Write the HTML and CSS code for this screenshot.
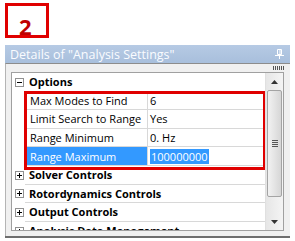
FILE: index.html
```html
<!DOCTYPE html>
<html lang="en">
<head>
    <meta charset="UTF-8">
    <title>Details of Analysis Settings</title>
    <link rel="stylesheet" href="styles.css">
</head>
<body>
    <div class="step"><span>2</span></div>

    <div class="panel">
        <div class="title">
            <span>Details of "Analysis Settings"</span>
            <svg class="pin" width="9" height="10" viewBox="0 0 9 10">
                <path d="M2.5 0.5h4v5h-4z" fill="none" stroke="#fff"/>
                <path d="M5 1v4" stroke="#fff"/>
                <path d="M0 6.5h9M4.5 7v3" stroke="#fff"/>
            </svg>
        </div>
        <div class="frame">
            <div class="grip-row"><div class="grip"></div></div>
            <div class="view">
                <div class="tree">
                    <div class="row">
                        <div class="gutter">
                            <svg class="exp" width="9" height="9" viewBox="0 0 9 9"><rect x="0.5" y="0.5" width="8" height="8" fill="#fff" stroke="#919191"/><path d="M2 4.5h5" stroke="#000"/></svg>
                        </div>
                        <div class="cell group-name">Options</div>
                    </div>

                    <div class="props">
                        <div class="gutter-col"></div>
                        <div class="prop-rows">
                            <div class="row">
                                <div class="cell name">Max Modes to Find</div>
                                <div class="cell value">6</div>
                            </div>
                            <div class="row">
                                <div class="cell name">Limit Search to Range</div>
                                <div class="cell value">Yes</div>
                            </div>
                            <div class="row">
                                <div class="cell name">Range Minimum</div>
                                <div class="cell value">0. Hz</div>
                            </div>
                            <div class="row">
                                <div class="cell name selected">Range Maximum</div>
                                <div class="cell value"><span class="sel-text">100000000</span></div>
                            </div>
                        </div>
                    </div>

                    <div class="row">
                        <div class="gutter">
                            <svg class="exp" width="9" height="9" viewBox="0 0 9 9"><rect x="0.5" y="0.5" width="8" height="8" fill="#fff" stroke="#919191"/><path d="M2 4.5h5M4.5 2v5" stroke="#000"/></svg>
                        </div>
                        <div class="cell group-name">Solver Controls</div>
                    </div>
                    <div class="row">
                        <div class="gutter">
                            <svg class="exp" width="9" height="9" viewBox="0 0 9 9"><rect x="0.5" y="0.5" width="8" height="8" fill="#fff" stroke="#919191"/><path d="M2 4.5h5M4.5 2v5" stroke="#000"/></svg>
                        </div>
                        <div class="cell group-name">Rotordynamics Controls</div>
                    </div>
                    <div class="row">
                        <div class="gutter">
                            <svg class="exp" width="9" height="9" viewBox="0 0 9 9"><rect x="0.5" y="0.5" width="8" height="8" fill="#fff" stroke="#919191"/><path d="M2 4.5h5M4.5 2v5" stroke="#000"/></svg>
                        </div>
                        <div class="cell group-name">Output Controls</div>
                    </div>
                    <div class="row">
                        <div class="gutter">
                            <svg class="exp" width="9" height="9" viewBox="0 0 9 9"><rect x="0.5" y="0.5" width="8" height="8" fill="#fff" stroke="#919191"/><path d="M2 4.5h5M4.5 2v5" stroke="#000"/></svg>
                        </div>
                        <div class="cell group-name">Analysis Data Management</div>
                    </div>
                </div>

                <div class="scrollbar">
                    <div class="arrow">
                        <svg width="7" height="4" viewBox="0 0 7 4"><path d="M3.5 0L7 4H0z" fill="#333"/></svg>
                    </div>
                    <div class="track">
                        <div class="thumb">
                            <div class="thumb-grip"></div>
                        </div>
                    </div>
                    <div class="arrow">
                        <svg width="7" height="4" viewBox="0 0 7 4"><path d="M0 0h7L3.5 4z" fill="#333"/></svg>
                    </div>
                </div>
            </div>
        </div>
    </div>
</body>
</html>
```

FILE: styles.css
```css
body {
    margin: 0;
    width: 295px;
    height: 241px;
    overflow: hidden;
    background-color: #fff;
    font-family: "Open Sans", "Noto Sans", sans-serif;
}
.step {
    margin: 3px 0 0 5px;
    width: 44px;
    height: 35px;
    box-sizing: border-box;
    border: 3px solid #e00000;
    color: #c00000;
    font-weight: bold;
    font-size: 22px;
    line-height: 22px;
    padding: 9px 0 0 11px;
}
.panel {
    margin: 7px 0 0 5px;
    width: 285px;
    height: 193px;
    box-sizing: border-box;
    background-color: #f0f0f0;
    border-bottom: 2px solid #6e6e6e;
    display: flex;
    flex-direction: column;
}
.title {
    height: 18px;
    flex-shrink: 0;
    background: linear-gradient(#b6cae4, #a8bfdc);
    color: #fafcff;
    font-size: 12.5px;
    display: flex;
    align-items: center;
    justify-content: space-between;
    padding: 0 6px 0 5px;
}
.pin {
    display: block;
}
.frame {
    flex: 1;
    display: flex;
    flex-direction: column;
    min-height: 0;
    border-top: 1px solid #8c8c8c;
    border-left: 1px solid #b4b4b4;
    padding: 0 6px 5px 5px;
}
.grip-row {
    height: 8px;
    flex-shrink: 0;
    display: flex;
    justify-content: flex-end;
    align-items: center;
}
.grip {
    width: 11px;
    height: 4px;
    background: repeating-linear-gradient(90deg, #555 0 1px, transparent 1px 2px);
}
.view {
    flex: 1;
    min-height: 0;
    display: flex;
    border: 1px solid #a0a0a0;
    background-color: #fff;
    overflow: hidden;
}
.tree {
    flex: 1;
    overflow: hidden;
    font-size: 11px;
    color: #000;
}
.row {
    display: flex;
    height: 18.6px;
}
.gutter {
    width: 13px;
    flex-shrink: 0;
    display: flex;
    align-items: center;
}
.exp {
    display: block;
    margin-left: 3px;
}
.cell {
    box-sizing: border-box;
    border-bottom: 1px solid #d8d8d8;
    display: flex;
    align-items: center;
    white-space: nowrap;
    overflow: hidden;
}
.group-name {
    flex: 1;
    font-weight: bold;
    padding-left: 4px;
}
.props {
    display: flex;
}
.gutter-col {
    width: 13px;
    flex-shrink: 0;
}
.prop-rows {
    flex: 1;
    position: relative;
}
.prop-rows::after {
    content: "";
    position: absolute;
    top: -1px;
    bottom: -4px;
    left: -1px;
    right: -1px;
    border: 3px solid #e00000;
}
.name {
    width: 123px;
    padding-left: 5px;
    border-right: 1px solid #d8d8d8;
}
.value {
    flex: 1;
    padding-left: 2px;
}
.selected {
    background-color: #3399ff;
    color: #fff;
}
.sel-text {
    background-color: #3399ff;
    color: #fff;
    padding: 0 1px;
}
.scrollbar {
    width: 17px;
    flex-shrink: 0;
    display: flex;
    flex-direction: column;
    background: linear-gradient(90deg, #e6e6e6, #f4f4f4);
    border-left: 1px solid #e0e0e0;
}
.arrow {
    height: 17px;
    flex-shrink: 0;
    display: flex;
    align-items: center;
    justify-content: center;
}
.track {
    flex: 1;
    display: flex;
    flex-direction: column;
    padding: 0 1px;
}
.thumb {
    height: 107px;
    box-sizing: border-box;
    border: 1px solid #a4a4a4;
    border-radius: 2px;
    background: linear-gradient(90deg, #f2f2f2, #e4e4e4 50%, #d6d6d6);
    display: flex;
    align-items: center;
    justify-content: center;
}
.thumb-grip {
    width: 6px;
    height: 7px;
    background: repeating-linear-gradient(#555 0 1px, transparent 1px 2px);
}
```
